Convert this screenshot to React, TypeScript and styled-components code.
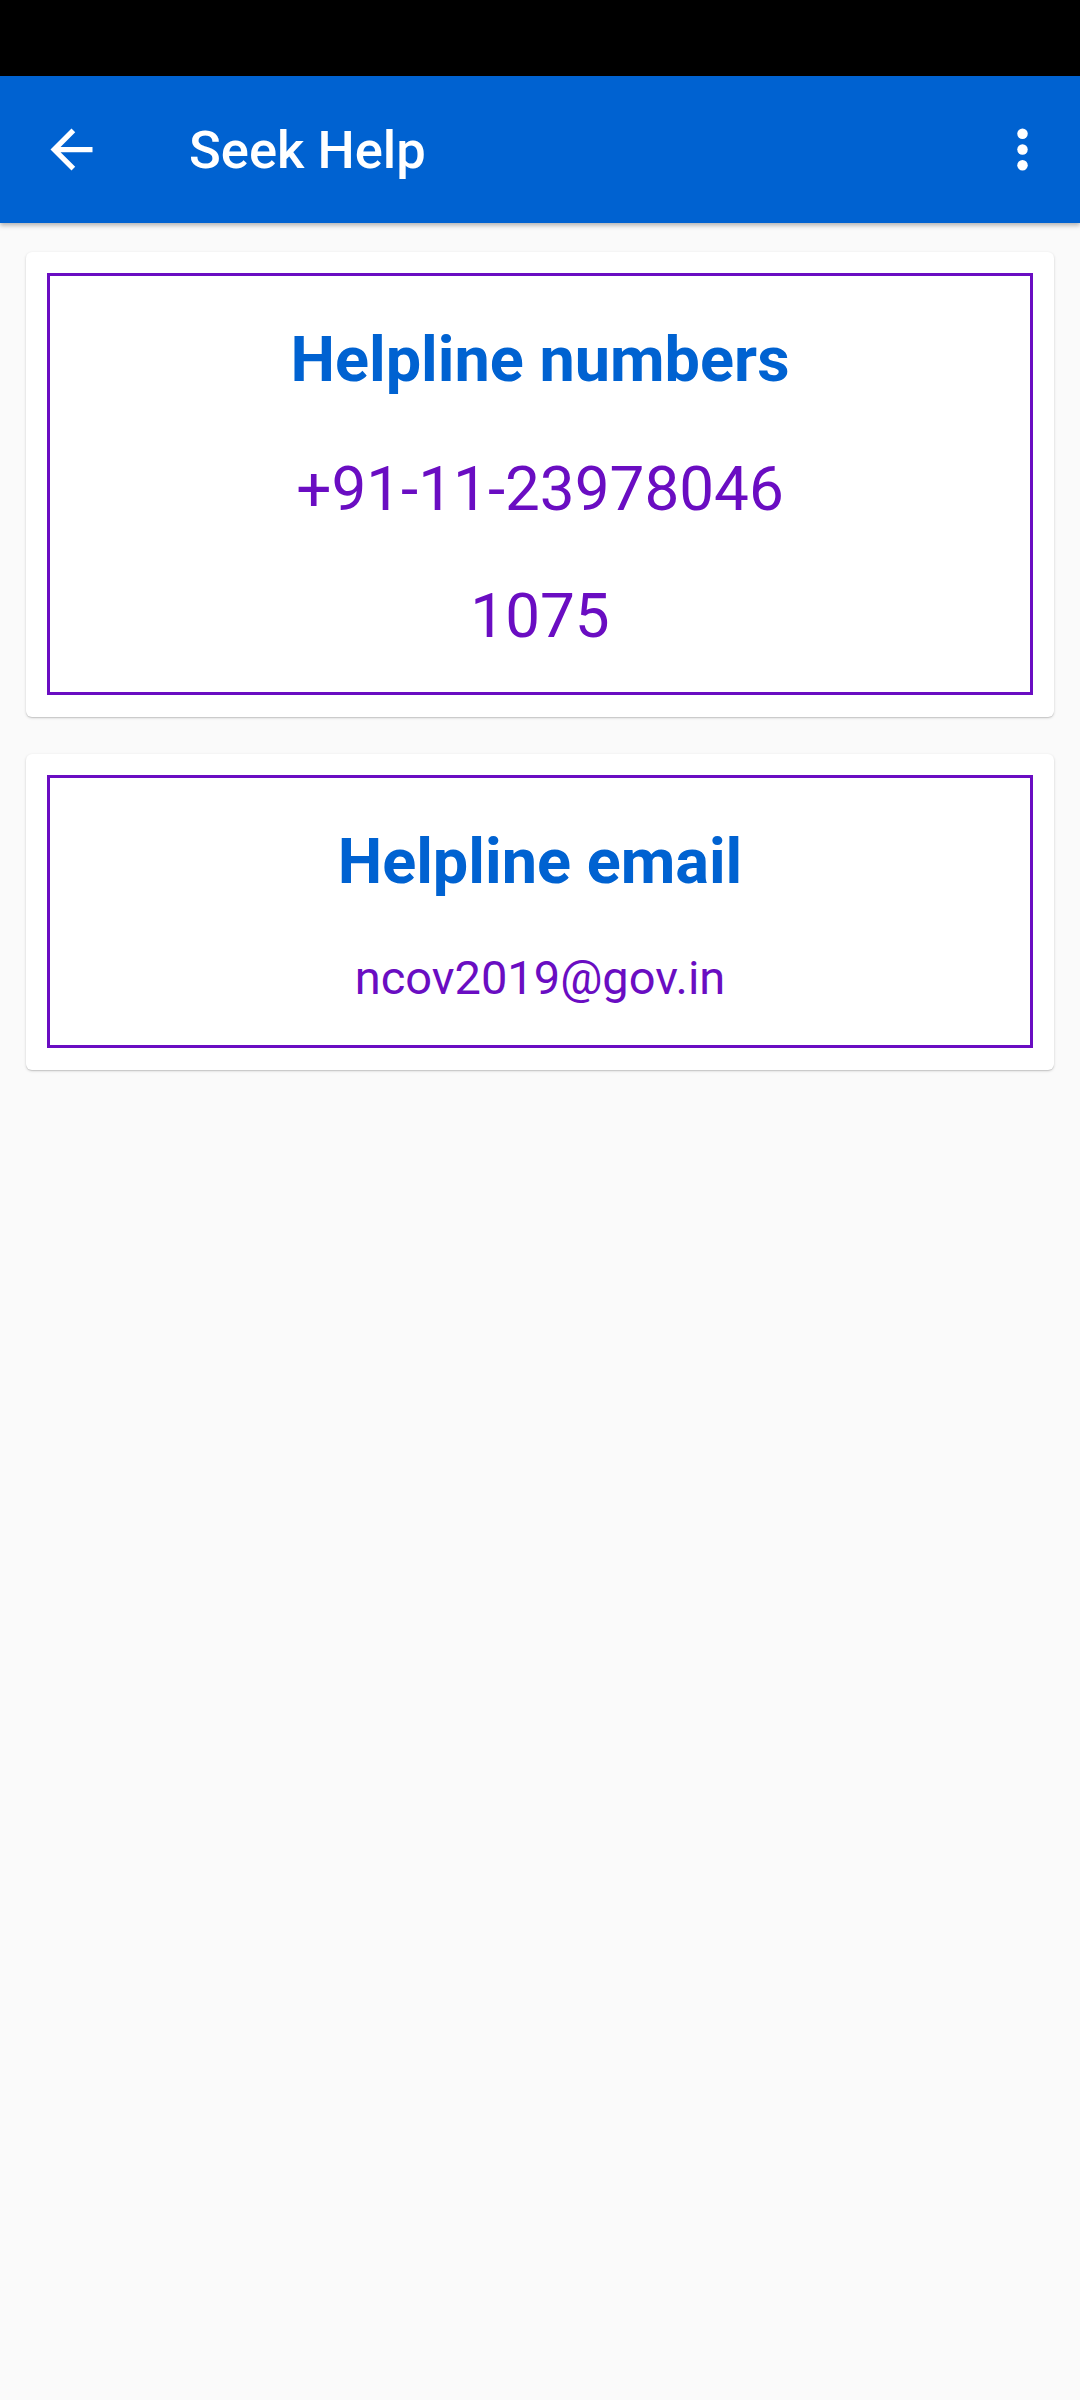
import React from "react";
import styled, { createGlobalStyle } from "styled-components";

const GlobalStyle = createGlobalStyle`
  html, body {
    margin: 0;
    padding: 0;
    background: #fafafa;
    font-family: Roboto, "Noto Sans", "Liberation Sans", sans-serif;
  }
  #root {
    min-height: 2400px;
    background: #fafafa;
  }
  * { box-sizing: border-box; }
`;

const Screen = styled.div`
  width: 1080px;
  min-height: 2400px;
  display: flex;
  flex-direction: column;
  background: #fafafa;
`;

const StatusBar = styled.div`
  height: 76px;
  background: #000;
`;

const AppBar = styled.header`
  height: 147px;
  background: #0062d1;
  display: flex;
  align-items: center;
  padding: 0 26px 0 40px;
  box-shadow: 0 2px 4px rgba(0, 0, 0, 0.22), 0 4px 5px rgba(0, 0, 0, 0.08);
  position: relative;
  z-index: 1;
`;

const IconButton = styled.button`
  width: 63px;
  height: 63px;
  padding: 0;
  border: none;
  background: transparent;
  display: flex;
  align-items: center;
  justify-content: center;
  color: #fff;
`;

const Title = styled.h1`
  flex: 1;
  margin: 0 0 0 86px;
  font-size: 52.5px;
  font-weight: 500;
  color: #fff;
  line-height: 62px;
  letter-spacing: 0;
`;

const Content = styled.main`
  display: flex;
  flex-direction: column;
  gap: 37px;
  padding: 29px 26px 0;
`;

const Card = styled.section`
  background: #fff;
  border-radius: 6px;
  padding: 21px 21px 22px;
  box-shadow: 0 1px 3px rgba(0, 0, 0, 0.16), 0 1px 1px rgba(0, 0, 0, 0.1);
`;

const Frame = styled.div<{ $bottom: number }>`
  border: 3px solid #6a0dc2;
  display: flex;
  flex-direction: column;
  align-items: center;
  padding: 47px 0 ${(p) => p.$bottom}px;
`;

const Heading = styled.h2`
  margin: 0;
  font-size: 63px;
  line-height: 74px;
  font-weight: 700;
  color: #0062d1;
  text-align: center;
`;

const Value = styled.p<{ $size: number; $gap: number }>`
  margin: ${(p) => p.$gap}px 0 0;
  font-size: ${(p) => p.$size}px;
  line-height: ${(p) => Math.round(p.$size * 1.172)}px;
  font-weight: 400;
  color: #6a0dc2;
  text-align: center;
`;

const BackIcon = () => (
  <svg width="63" height="63" viewBox="0 0 24 24" fill="currentColor">
    <path d="M20 11H7.83l5.59-5.59L12 4l-8 8 8 8 1.41-1.41L7.83 13H20v-2z" />
  </svg>
);

const MoreIcon = () => (
  <svg width="63" height="63" viewBox="0 0 24 24" fill="currentColor">
    <circle cx="12" cy="6" r="2" />
    <circle cx="12" cy="12" r="2" />
    <circle cx="12" cy="18" r="2" />
  </svg>
);

export default function App() {
  return (
    <Screen>
      <GlobalStyle />
      <StatusBar />
      <AppBar>
        <IconButton aria-label="Back">
          <BackIcon />
        </IconButton>
        <Title>Seek Help</Title>
        <IconButton aria-label="More options">
          <MoreIcon />
        </IconButton>
      </AppBar>
      <Content>
        <Card>
          <Frame $bottom={40}>
            <Heading>Helpline numbers</Heading>
            <Value $size={62} $gap={55}>+91-11-23978046</Value>
            <Value $size={62} $gap={54}>1075</Value>
          </Frame>
        </Card>
        <Card>
          <Frame $bottom={40}>
            <Heading>Helpline email</Heading>
            <Value $size={47} $gap={51}>ncov2019@gov.in</Value>
          </Frame>
        </Card>
      </Content>
    </Screen>
  );
}
